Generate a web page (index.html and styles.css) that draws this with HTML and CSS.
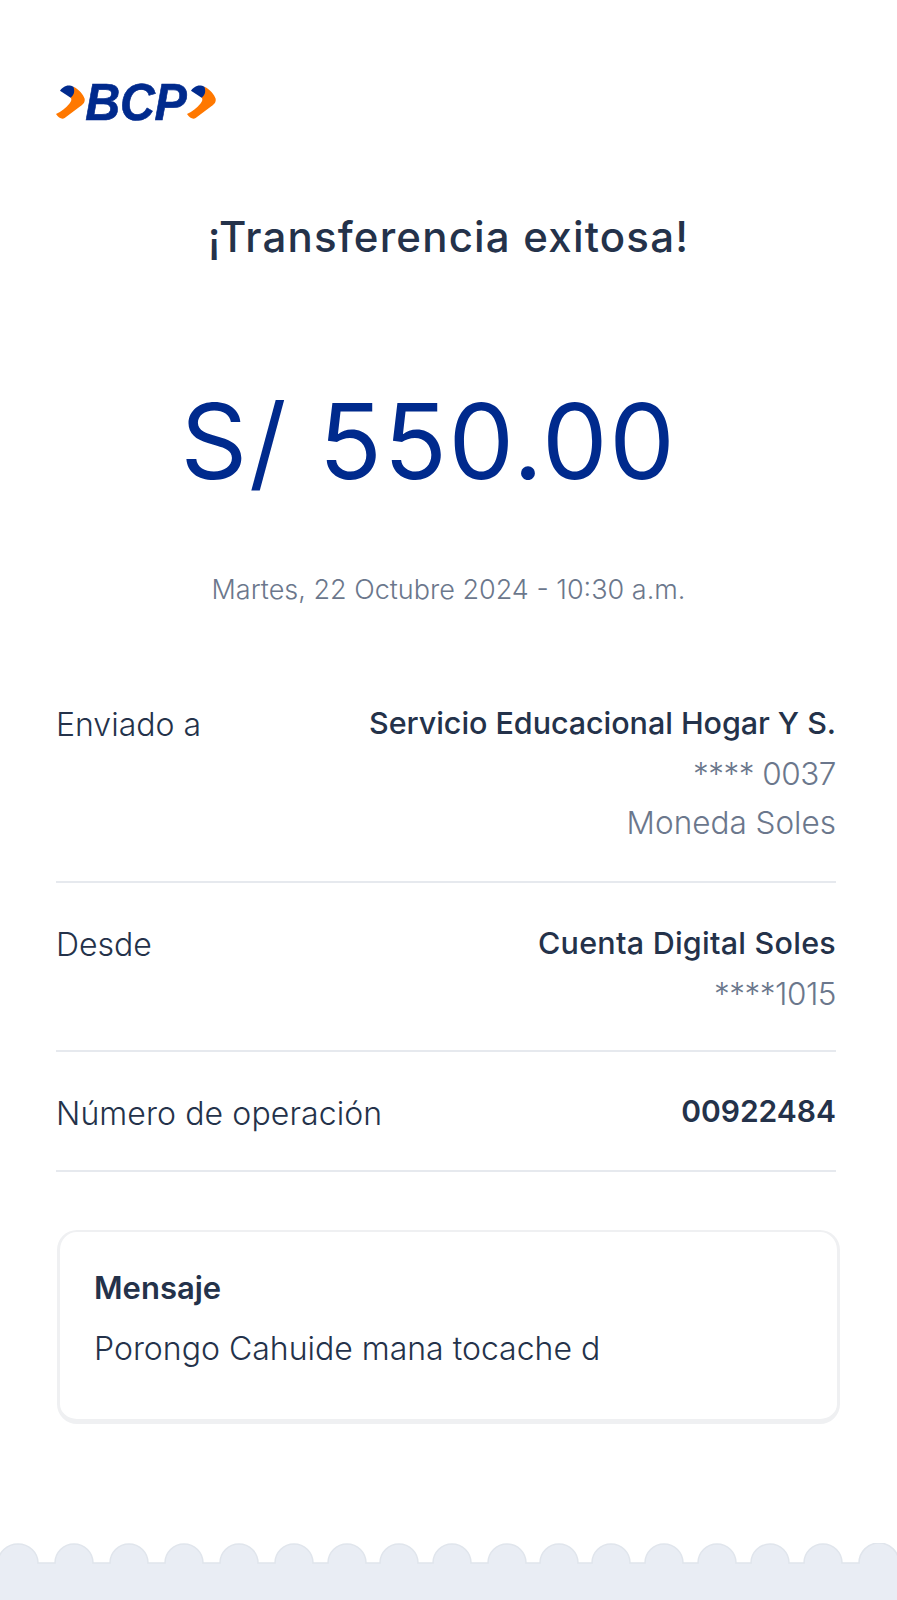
FILE: index.html
```html
<!DOCTYPE html>
<html lang="es">
<head>
<meta charset="utf-8">
<title>Transferencia exitosa</title>
<link rel="stylesheet" href="styles.css">
</head>
<body>
<main class="page">
  <header class="logo">
    <svg width="162" height="44" viewBox="48 60 486 132" role="img" aria-label="BCP">
      <g>
        <path class="chev-o" d="M100 80C118 88 130 104 134 116C135 126 132 130 122 138L74 174C66 179 56 174 48 162C64 154 78 144 88 131C96 123 96 115 88 109Z"/>
        <path class="chev-b" d="M60 92C64 85 72 79 80 77C88 76 96 78 100 80C105 92 103 104 92 113Z"/>
      </g>
      <text class="logo-text" transform="translate(136 181) scale(.93 1)">BCP</text>
      <g transform="translate(393 0)">
        <path class="chev-o" d="M100 80C118 88 130 104 134 116C135 126 132 130 122 138L74 174C66 179 56 174 48 162C64 154 78 144 88 131C96 123 96 115 88 109Z"/>
        <path class="chev-b" d="M60 92C64 85 72 79 80 77C88 76 96 78 100 80C105 92 103 104 92 113Z"/>
      </g>
    </svg>
  </header>
  <h1 class="title">¡Transferencia exitosa!</h1>
  <div class="amount">S/ 550.00</div>
  <div class="date">Martes, 22 Octubre 2024 - 10:30 a.m.</div>
  <section class="rows">
    <div class="row row-first">
      <div class="label">Enviado a</div>
      <div class="values"><div class="strong strong-tight">Servicio Educacional Hogar Y S.</div><div class="muted muted-tight">**** 0037</div><div class="muted">Moneda Soles</div></div>
    </div>
    <div class="row">
      <div class="label">Desde</div>
      <div class="values"><div class="strong strong-wide">Cuenta Digital Soles</div><div class="muted muted-tight">****1015</div></div>
    </div>
    <div class="row">
      <div class="label label-wide">Número de operación</div>
      <div class="values"><div class="strong bold">00922484</div></div>
    </div>
  </section>
  <section class="card">
    <div class="card-title">Mensaje</div>
    <div class="card-text">Porongo Cahuide mana tocache d</div>
  </section>
</main>
<footer class="edge">
  <svg class="edge-svg" width="897" height="57" viewBox="0 0 897 57" aria-hidden="true">
    <path class="scallop" d="M-2 20A20 19 0 0 1 38 20H55A19 19 0 0 1 93 20H110A19 19 0 0 1 148 20H165A19 19 0 0 1 203 20H220A19 19 0 0 1 258 20H275A19 19 0 0 1 313 20H328A19 19 0 0 1 366 20H380A19 19 0 0 1 418 20H433A19 19 0 0 1 471 20H488A19 19 0 0 1 526 20H540A19 19 0 0 1 578 20H592A19 19 0 0 1 630 20H645A19 19 0 0 1 683 20H698A19 19 0 0 1 736 20H751A19 19 0 0 1 789 20H804A19 19 0 0 1 842 20H859A19 19 0 0 1 899 20V59H-2Z"/>
  </svg>
</footer>
</body>
</html>
```
FILE: styles.css
```css
* { box-sizing: border-box; }
html, body { margin: 0; padding: 0; background: #fff; }
body { width: 897px; height: 1600px; overflow: hidden; font-family: "Inter", "Liberation Sans", sans-serif; color: #24324a; display: flex; flex-direction: column; }
.page { flex: 1; padding: 80px 61px 0 56px; }
.logo { height: 44px; }
.logo svg { display: block; overflow: visible; }
.chev-o { fill: #ff7800; }
.chev-b { fill: #002a8d; }
.logo-text { font: italic 700 156px "Liberation Sans", sans-serif; fill: #002a8d; stroke: #002a8d; stroke-width: 2px; letter-spacing: -1px; }
.title { margin: 87px -5px 0 0; text-align: center; font-size: 42px; line-height: 52px; font-weight: 500; letter-spacing: 1.2px; }
.amount { margin: 114px 35px 0 0; text-align: center; font-size: 104px; line-height: 128px; color: #002a8d; font-weight: 400; letter-spacing: 1.6px; }
.date { margin: 67px -5px 0 0; text-align: center; font-size: 27px; line-height: 36px; color: #6b778c; font-weight: 300; }
.rows { margin-top: 55px; }
.row { display: flex; justify-content: space-between; padding: 37px 0 32px; border-bottom: 2px solid #e6e9ee; font-size: 32px; line-height: 49px; }
.row-first { padding-bottom: 34px; }
.label { font-weight: 300; }
.label-wide { letter-spacing: .1px; }
.values { text-align: right; font-size: 30.5px; }
.strong { font-weight: 500; margin: -2px 0 2px; }
.strong-tight { letter-spacing: -.05px; }
.strong-wide { letter-spacing: .25px; }
.bold { font-weight: 600; font-size: 30px; }
.muted { color: #6b778c; font-weight: 300; font-size: 31.5px; }
.muted-tight { letter-spacing: -.5px; }
.card { margin: 58px 0 0 1px; width: 783px; height: 194px; background: #fff; border: solid #eff0f2; border-width: 2px 3px 5px; border-radius: 20px; padding: 36px 34px 0; }
.card-title { font-size: 31px; line-height: 40px; font-weight: 600; }
.card-text { margin-top: 21px; font-size: 32px; line-height: 40px; font-weight: 300; }
.edge { height: 57px; }
.edge-svg { display: block; overflow: hidden; }
.scallop { fill: #e9edf4; stroke: #e0e5ec; stroke-width: 1.5px; }
```
